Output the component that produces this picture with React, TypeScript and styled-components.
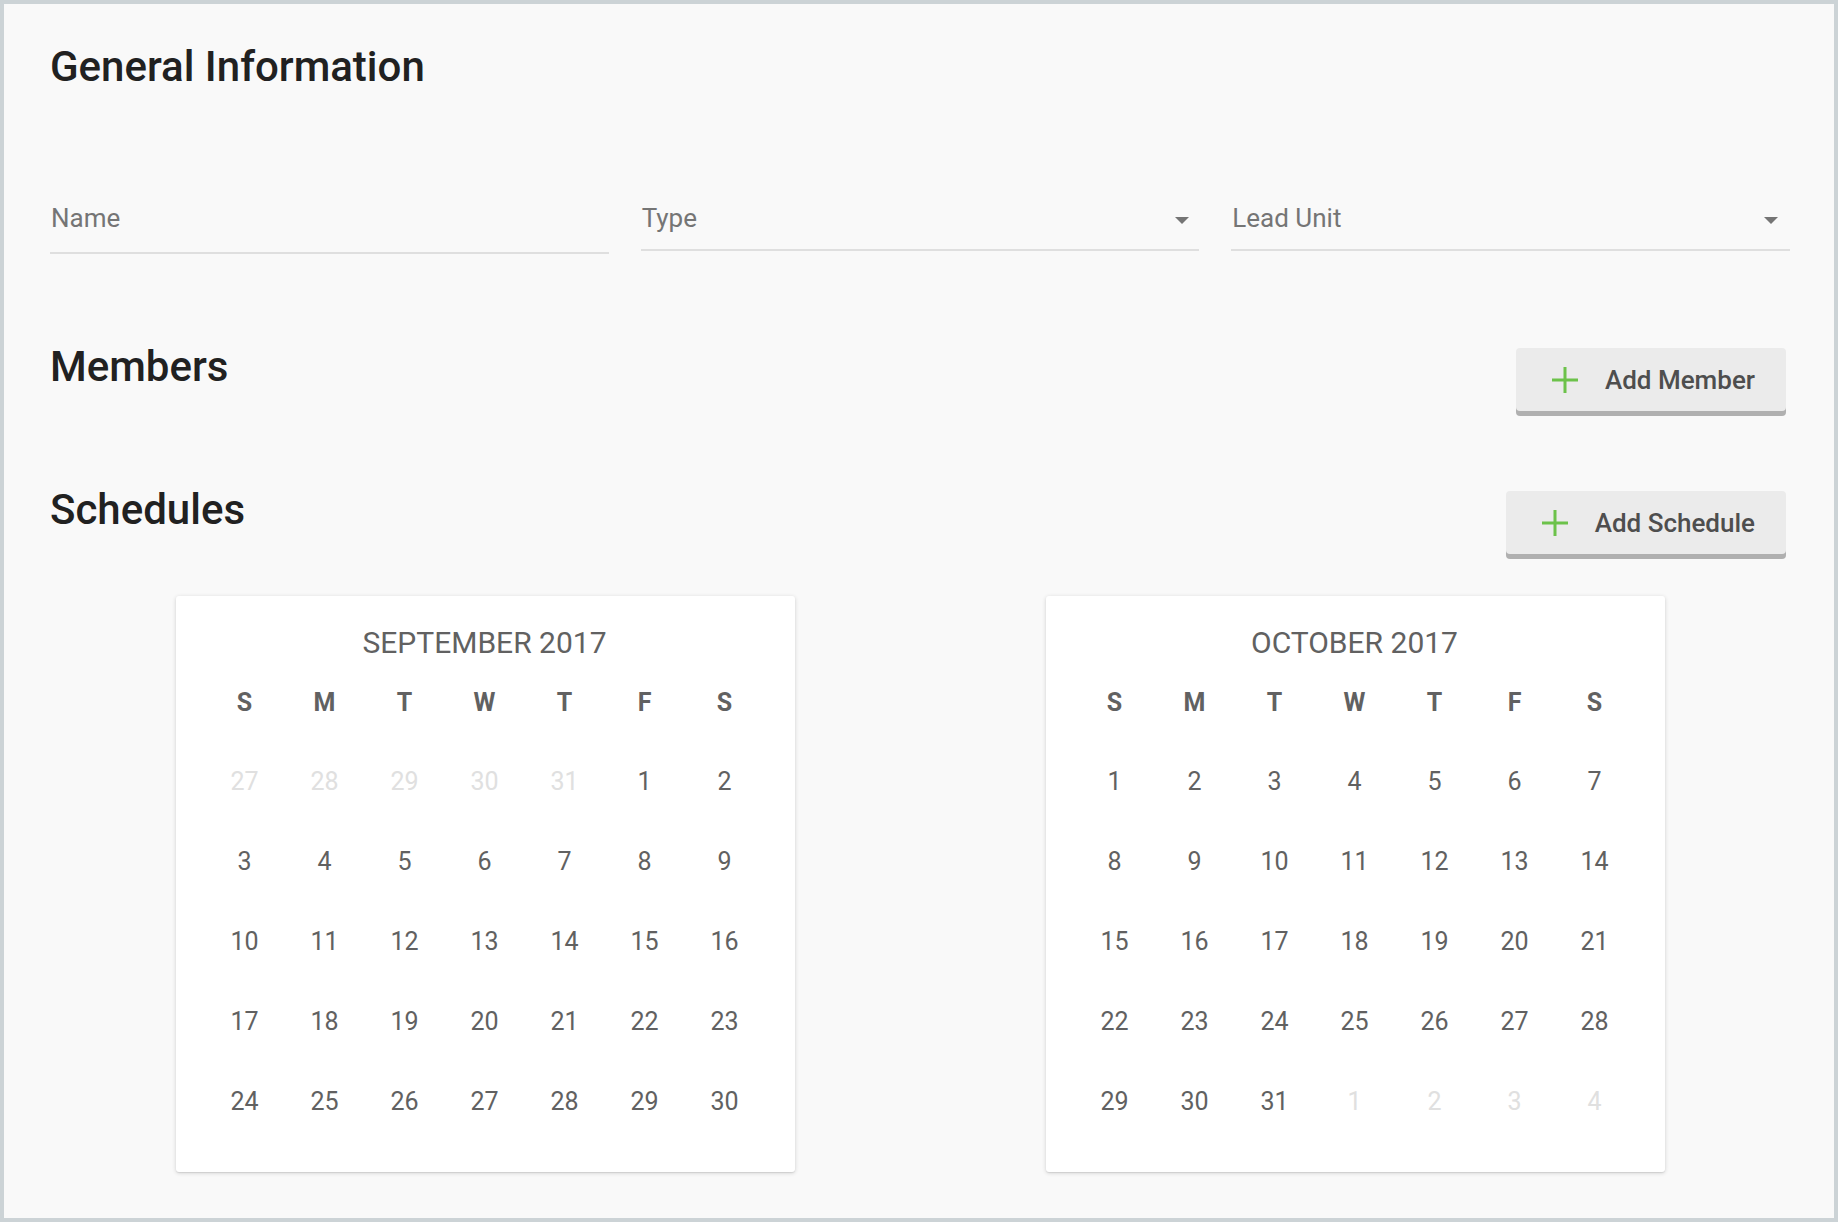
import React from "react";
import styled, { createGlobalStyle } from "styled-components";

const GlobalStyle = createGlobalStyle`
  html, body {
    margin: 0;
    padding: 0;
    background: #f9f9f9;
  }
  body {
    font-family: Roboto, "Liberation Sans", Arial, sans-serif;
  }
  *, *::before, *::after {
    box-sizing: border-box;
  }
`;

const Frame = styled.div`
  width: 1838px;
  height: 1222px;
  border: 4px solid #ccd3d6;
  background: #f9f9f9;
  padding: 39px 44px 0 46px;
  overflow: hidden;
`;

const SectionTitle = styled.h2`
  margin: 0;
  font-size: 42px;
  line-height: 48px;
  font-weight: 500;
  color: #212121;
`;

const FieldGrid = styled.div`
  display: grid;
  grid-template-columns: repeat(3, 1fr);
  column-gap: 32px;
  align-items: start;
  margin-top: 112px;
`;

const FieldBox = styled.div<{ $pad: number; $padRight: number }>`
  display: flex;
  align-items: flex-start;
  padding-bottom: ${(p) => p.$pad}px;
  padding-right: ${(p) => p.$padRight}px;
  border-bottom: 2px solid #dfdfdf;
`;

const FieldLabel = styled.span`
  flex: 1;
  padding-left: 1px;
  font-size: 26px;
  line-height: 30px;
  font-weight: 400;
  color: #757575;
`;

const Arrow = styled.svg`
  margin-top: 14px;
  flex: none;
`;

const HeaderRow = styled.div<{ $top: number }>`
  display: flex;
  justify-content: space-between;
  align-items: flex-start;
  margin-top: ${(p) => p.$top}px;
`;

const ActionButton = styled.button`
  display: inline-flex;
  align-items: center;
  gap: 27px;
  height: 63px;
  margin: 5px 4px 0 0;
  padding: 0 31px 0 36px;
  border: none;
  border-radius: 4px;
  background: #ebebeb;
  box-shadow: 0 5px 0 #b0b0b0;
  font-family: Roboto, "Liberation Sans", Arial, sans-serif;
  font-size: 26px;
  font-weight: 500;
  color: #4e4e4e;
  cursor: pointer;
`;

const CalendarRow = styled.div`
  display: grid;
  grid-template-columns: 1fr 1fr;
  justify-items: center;
  margin-top: 42px;
`;

const Card = styled.div`
  width: 619px;
  height: 576px;
  background: #ffffff;
  border-radius: 3px;
  box-shadow: 0 1px 4px rgba(0, 0, 0, 0.16), 0 1px 1px rgba(0, 0, 0, 0.08);
  padding: 29px 30px 0 29px;
`;

const MonthTitle = styled.div`
  text-align: center;
  font-size: 30px;
  line-height: 36px;
  font-weight: 400;
  color: #616161;
  text-transform: uppercase;
`;

const WeekRow = styled.div`
  display: grid;
  grid-template-columns: repeat(7, 80px);
  margin-top: 27px;
  font-size: 25px;
  line-height: 30px;
  font-weight: 700;
  color: #616161;
  text-align: center;
`;

const DaysGrid = styled.div`
  display: grid;
  grid-template-columns: repeat(7, 80px);
  grid-auto-rows: 80px;
  margin-top: 24px;
`;

const DayCell = styled.div<{ $muted?: boolean }>`
  font-size: 25px;
  line-height: 80px;
  text-align: center;
  color: ${(p) => (p.$muted ? "#e0e0e0" : "#616161")};
`;

const PlusIcon = () => (
  <svg width="26" height="26" viewBox="0 0 26 26">
    <path d="M13 0 V26 M0 13 H26" stroke="#6cc24a" strokeWidth="3" fill="none" />
  </svg>
);

const DropArrow = () => (
  <Arrow width="14" height="7" viewBox="0 0 14 7">
    <polygon points="0,0 14,0 7,7" fill="#757575" />
  </Arrow>
);

type Day = { n: number; muted?: boolean };

const range = (a: number, b: number, muted = false): Day[] => {
  const out: Day[] = [];
  for (let i = a; i <= b; i++) out.push({ n: i, muted });
  return out;
};

const months: { title: string; days: Day[] }[] = [
  { title: "September 2017", days: [...range(27, 31, true), ...range(1, 30)] },
  { title: "October 2017", days: [...range(1, 31), ...range(1, 4, true)] },
];

const WEEK = ["S", "M", "T", "W", "T", "F", "S"];

const Calendar = ({ title, days }: { title: string; days: Day[] }) => (
  <Card>
    <MonthTitle>{title}</MonthTitle>
    <WeekRow>
      {WEEK.map((d, i) => (
        <span key={i}>{d}</span>
      ))}
    </WeekRow>
    <DaysGrid>
      {days.map((d, i) => (
        <DayCell key={i} $muted={d.muted}>
          {d.n}
        </DayCell>
      ))}
    </DaysGrid>
  </Card>
);

export default function App() {
  return (
    <>
      <GlobalStyle />
      <Frame>
        <SectionTitle>General Information</SectionTitle>
        <FieldGrid>
          <FieldBox $pad={19} $padRight={0}>
            <FieldLabel>Name</FieldLabel>
          </FieldBox>
          <FieldBox $pad={16} $padRight={10}>
            <FieldLabel>Type</FieldLabel>
            <DropArrow />
          </FieldBox>
          <FieldBox $pad={16} $padRight={12}>
            <FieldLabel>Lead Unit</FieldLabel>
            <DropArrow />
          </FieldBox>
        </FieldGrid>

        <HeaderRow $top={89}>
          <SectionTitle>Members</SectionTitle>
          <ActionButton>
            <PlusIcon />
            Add Member
          </ActionButton>
        </HeaderRow>

        <HeaderRow $top={75}>
          <SectionTitle>Schedules</SectionTitle>
          <ActionButton>
            <PlusIcon />
            Add Schedule
          </ActionButton>
        </HeaderRow>

        <CalendarRow>
          {months.map((m) => (
            <Calendar key={m.title} title={m.title} days={m.days} />
          ))}
        </CalendarRow>
      </Frame>
    </>
  );
}
